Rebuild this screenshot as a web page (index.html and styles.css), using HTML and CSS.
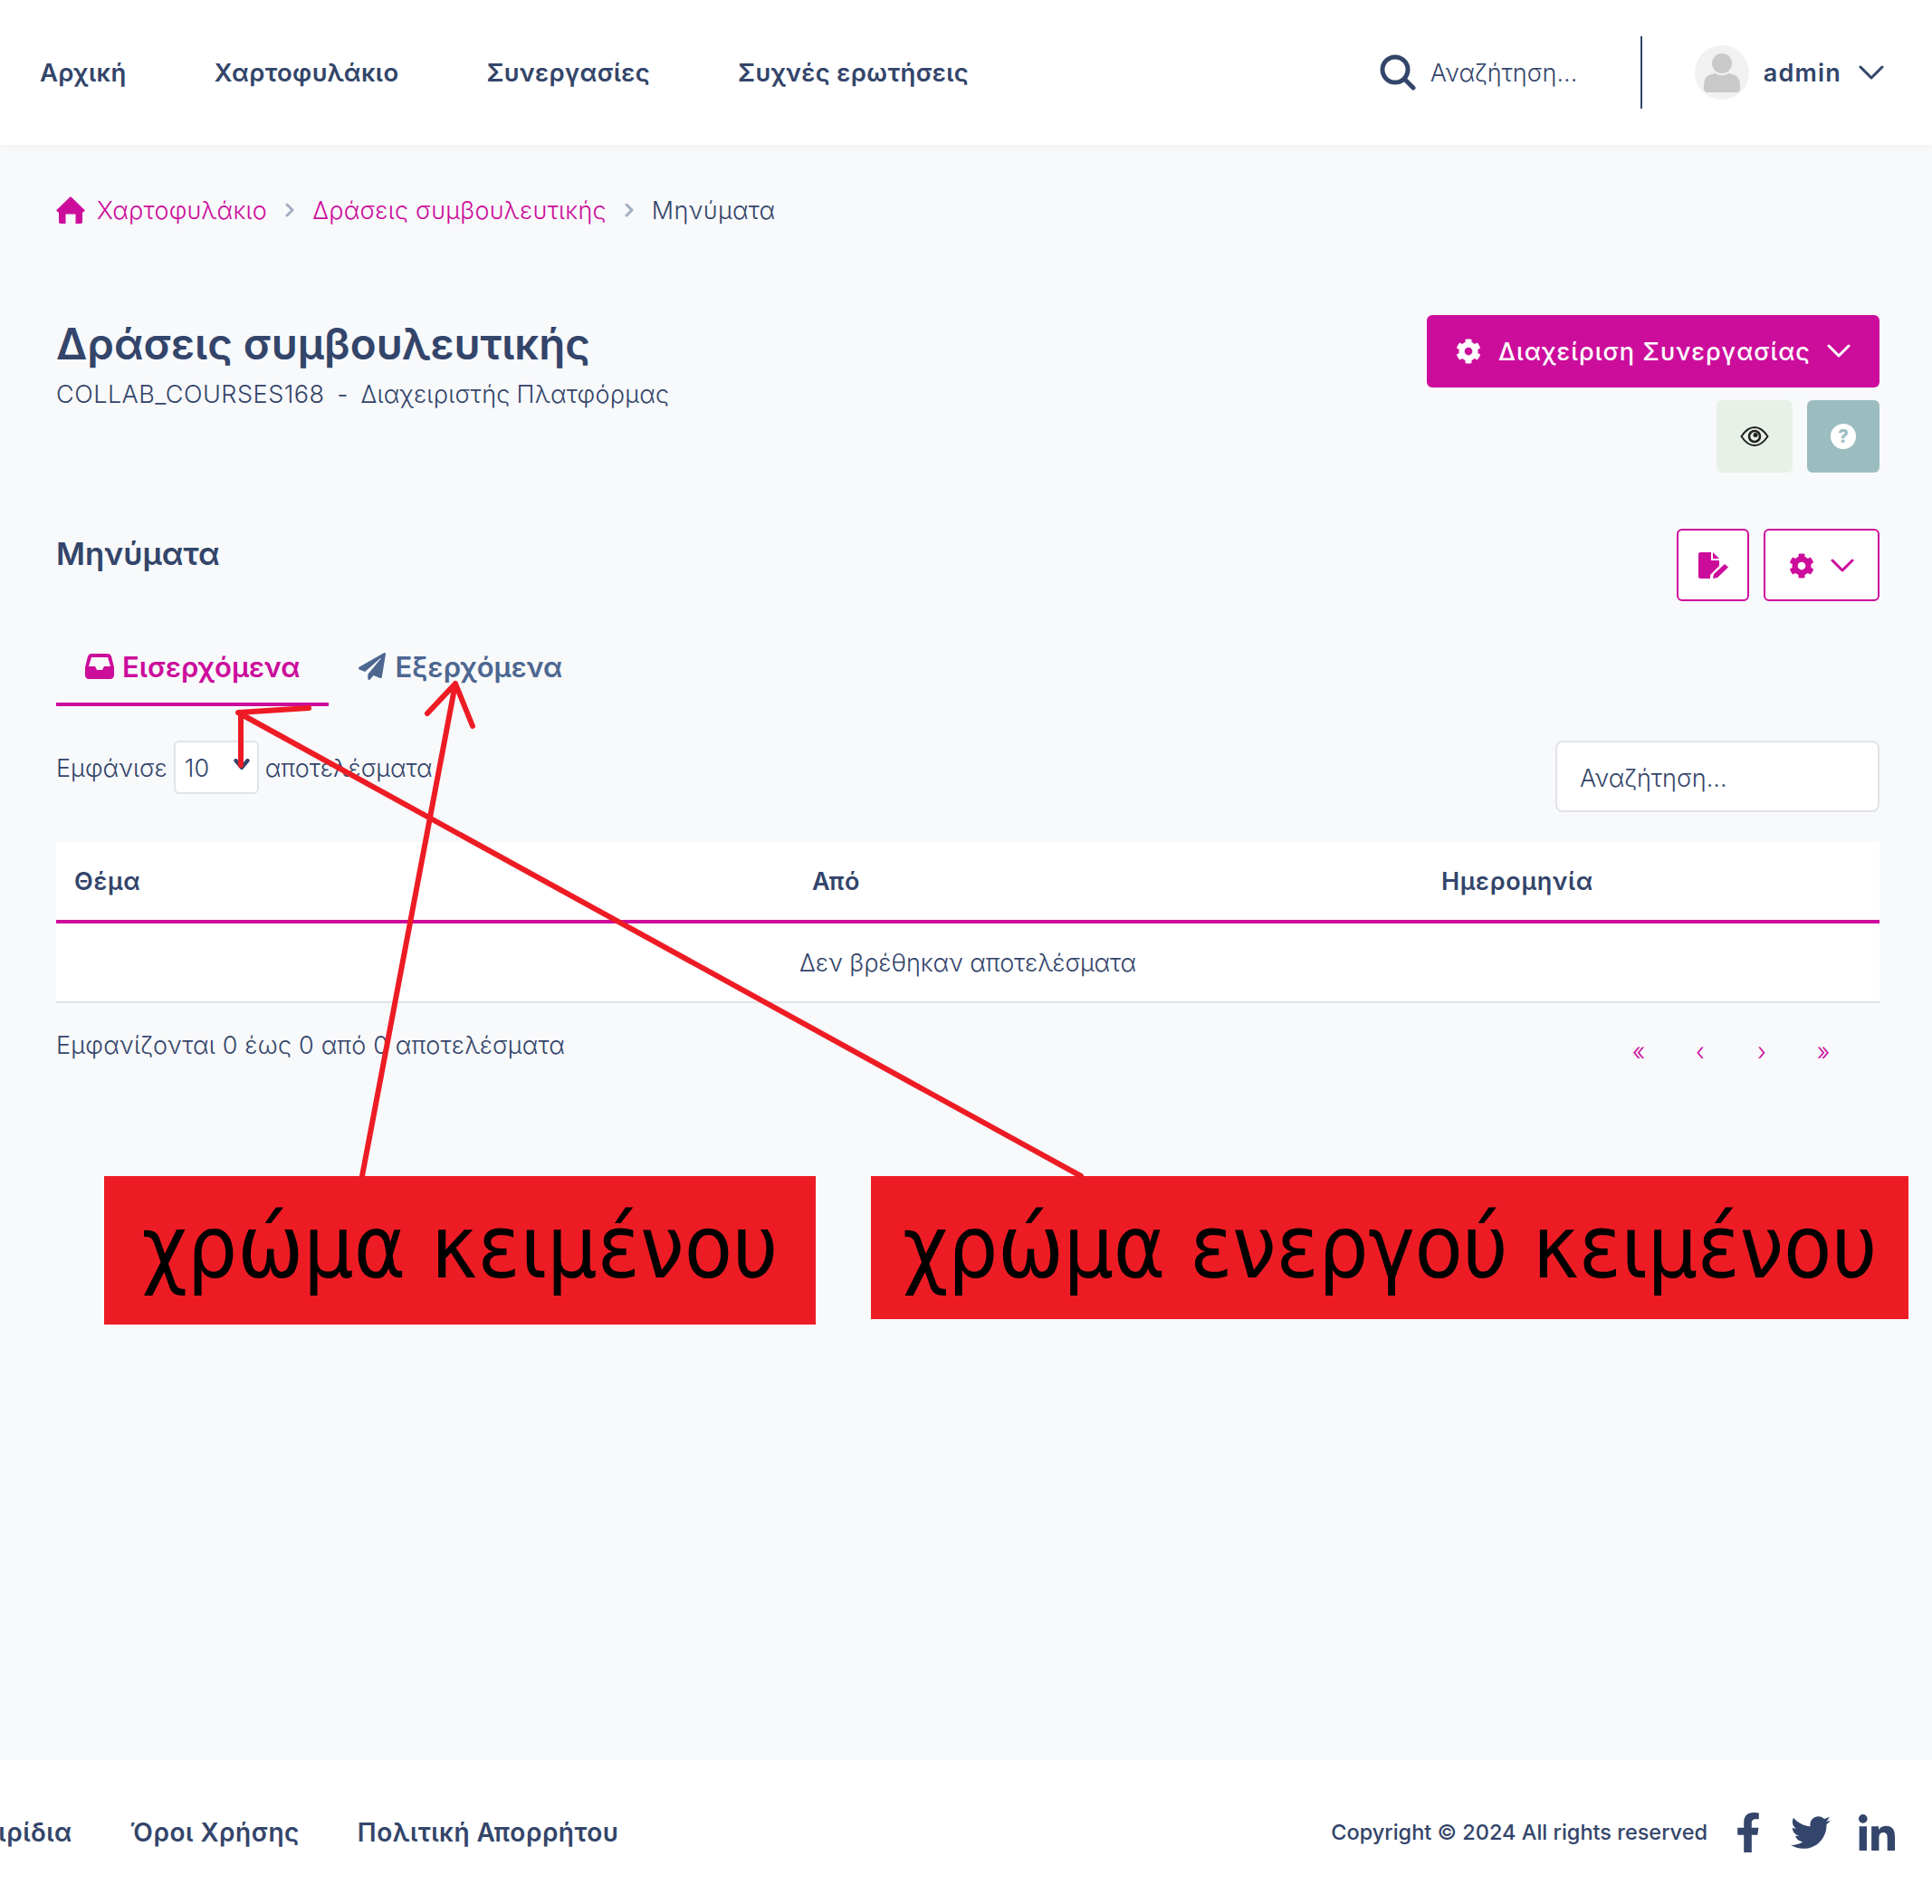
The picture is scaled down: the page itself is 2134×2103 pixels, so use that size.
FILE: index.html
```html
<!DOCTYPE html>
<html lang="el">
<head>
    <meta charset="UTF-8">
    <title>Μηνύματα</title>
    <link rel="stylesheet" href="styles.css">
</head>
<body>
    <header class="topbar">
        <nav class="topnav">
            <a href="#">Αρχική</a>
            <a href="#">Χαρτοφυλάκιο</a>
            <a href="#">Συνεργασίες</a>
            <a href="#">Συχνές ερωτήσεις</a>
        </nav>
        <div class="topsearch">
            <svg class="search-icon" viewBox="0 0 40 40"><circle cx="17" cy="17" r="14" fill="none" stroke="currentColor" stroke-width="5"/><path d="M27 27l10 10" stroke="currentColor" stroke-width="5" stroke-linecap="round"/></svg>
            <span>Αναζήτηση...</span>
        </div>
        <div class="usermenu">
            <span class="avatar">
                <svg viewBox="0 0 60 60"><circle cx="30" cy="20" r="11" fill="#c9c9c9"/><path d="M10 48c0-9 1-13 6-15 3-1 5-2 7-2 2 3 12 3 14 0 2 0 4 1 7 2 5 2 6 6 6 15 0 3-2 4-4 4H14c-2 0-4-1-4-4z" fill="#c9c9c9"/></svg>
            </span>
            <span class="username">admin</span>
            <svg class="chev chev-user" viewBox="0 0 28 16"><path d="M2 2l12 12L26 2"/></svg>
        </div>
    </header>

    <main class="content">
        <div class="crumbs">
            <svg class="home-icon" viewBox="0 0 32 30"><path d="M16 0l16 15.500-3 2.500v10c0 1-.7 2-2 2h-5.500v-10.500h-11V30H5c-1.300 0-2-1-2-2V18l-3-2.500z"/></svg>
            <a href="#">Χαρτοφυλάκιο</a>
            <svg class="crumb-sep" viewBox="0 0 10 16"><path d="M2 2l6 6-6 6"/></svg>
            <a href="#">Δράσεις συμβουλευτικής</a>
            <svg class="crumb-sep" viewBox="0 0 10 16"><path d="M2 2l6 6-6 6"/></svg>
            <span>Μηνύματα</span>
        </div>

        <div class="course-head">
            <div class="course-title">
                <h1>Δράσεις συμβουλευτικής</h1>
                <p class="course-sub"><span class="course-code">COLLAB_COURSES168</span> &nbsp;-&nbsp; Διαχειριστής Πλατφόρμας</p>
            </div>
            <div class="course-actions">
                <button class="btn-manage">
                    <svg class="gear" viewBox="0 0 512 512"><path d="M487.400 315.700l-42.600-24.600c4.300-23.200 4.300-47 0-70.200l42.600-24.600c4.900-2.800 7.100-8.600 5.500-14-11.100-35.600-30-67.800-54.700-94.600-3.800-4.100-10-5.100-14.800-2.300L380.800 110c-17.900-15.400-38.500-27.300-60.800-35.100V25.800c0-5.600-3.900-10.500-9.400-11.700-36.700-8.200-74.300-7.800-109.200 0-5.500 1.200-9.400 6.100-9.400 11.700V75c-22.200 7.900-42.800 19.800-60.800 35.100L88.700 85.500c-4.900-2.800-11-1.900-14.800 2.300-24.700 26.700-43.600 58.900-54.700 94.600-1.700 5.400.6 11.200 5.500 14L67.300 221c-4.300 23.200-4.300 47 0 70.200l-42.600 24.600c-4.900 2.800-7.100 8.600-5.500 14 11.100 35.600 30 67.800 54.700 94.600 3.800 4.100 10 5.100 14.800 2.300l42.600-24.600c17.900 15.400 38.500 27.300 60.800 35.100v49.200c0 5.600 3.900 10.500 9.400 11.700 36.700 8.200 74.300 7.800 109.200 0 5.500-1.200 9.400-6.100 9.400-11.700v-49.200c22.200-7.900 42.800-19.800 60.800-35.100l42.600 24.600c4.900 2.800 11 1.900 14.800-2.300 24.700-26.700 43.600-58.900 54.700-94.600 1.500-5.500-.7-11.300-5.600-14.100zM256 336c-44.100 0-80-35.900-80-80s35.900-80 80-80 80 35.900 80 80-35.900 80-80 80z"/></svg>
                    <span>Διαχείριση Συνεργασίας</span>
                    <svg class="chev chev-manage" viewBox="0 0 26 16"><path d="M2 2l11 11L24 2"/></svg>
                </button>
                <div class="small-actions">
                    <button class="btn-eye">
                        <svg viewBox="0 0 32 24"><path d="M1.500 12C6 5 11 2 16 2s10 3 14.500 10C26 19 21 22 16 22S6 19 1.500 12z" fill="none" stroke="#222" stroke-width="2"/><circle cx="16" cy="12" r="6" fill="none" stroke="#222" stroke-width="2.600"/><circle cx="17" cy="10.500" r="2.500" fill="#222"/></svg>
                    </button>
                    <button class="btn-help"><span>?</span></button>
                </div>
            </div>
        </div>

        <div class="section-head">
            <h2>Μηνύματα</h2>
            <div class="section-actions">
                <button class="btn-line btn-compose">
                    <svg viewBox="0 0 34 30"><path d="M2 0h12v9h9v6L13 25v4H2c-1 0-2-1-2-2V2C0 1 1 0 2 0zM16 0l7 7h-7zM29 13l4 3.500-12 11.500-5 1 1-5z" fill="currentColor"/></svg>
                </button>
                <button class="btn-line btn-tools">
                    <svg class="gear" viewBox="0 0 512 512"><path d="M487.400 315.700l-42.600-24.600c4.300-23.200 4.300-47 0-70.200l42.600-24.600c4.900-2.800 7.100-8.600 5.500-14-11.100-35.600-30-67.800-54.700-94.600-3.800-4.100-10-5.100-14.800-2.300L380.800 110c-17.900-15.400-38.500-27.300-60.800-35.100V25.800c0-5.600-3.900-10.500-9.400-11.700-36.700-8.200-74.300-7.800-109.200 0-5.500 1.200-9.400 6.100-9.400 11.700V75c-22.200 7.900-42.800 19.800-60.800 35.100L88.700 85.500c-4.900-2.800-11-1.900-14.800 2.300-24.700 26.700-43.600 58.900-54.700 94.600-1.700 5.400.6 11.200 5.500 14L67.300 221c-4.300 23.200-4.300 47 0 70.200l-42.600 24.600c-4.900 2.800-7.100 8.600-5.500 14 11.100 35.600 30 67.800 54.700 94.600 3.800 4.100 10 5.100 14.800 2.300l42.600-24.600c17.900 15.400 38.500 27.300 60.800 35.100v49.200c0 5.600 3.900 10.500 9.400 11.700 36.700 8.200 74.300 7.800 109.200 0 5.500-1.200 9.400-6.100 9.400-11.700v-49.200c22.200-7.900 42.800-19.800 60.800-35.100l42.600 24.600c4.900 2.800 11 1.900 14.800-2.300 24.700-26.700 43.600-58.900 54.700-94.600 1.500-5.500-.7-11.300-5.600-14.100zM256 336c-44.100 0-80-35.900-80-80s35.900-80 80-80 80 35.900 80 80-35.900 80-80 80z"/></svg>
                    <svg class="chev chev-tools" viewBox="0 0 26 16"><path d="M2 2l11 11L24 2"/></svg>
                </button>
            </div>
        </div>

        <div class="tabs">
            <a href="#" class="tab tab-active">
                <svg viewBox="0 0 32 28"><path d="M7 0h18c2 0 3 1 4 3l3 12v9c0 2-2 4-4 4H4c-2 0-4-2-4-4v-9L3 3C4 1 5 0 7 0zm0 4L4 14h7l2 4h6l2-4h7L25 4z" fill="currentColor"/></svg>
                Εισερχόμενα
            </a>
            <a href="#" class="tab">
                <svg viewBox="0 0 512 512"><path fill="currentColor" d="M476 3.200L12.500 270.600c-18.100 10.400-15.800 35.600 2.200 43.200L121 358.400l287.300-253.200c5.500-4.900 13.300 2.600 8.600 8.300L176 407v80.500c0 23.600 28.500 32.900 42.500 15.800L282 426l124.600 52.200c14.200 6 30.400-2.900 33-18.200l72-432C515 7.800 493.300-6.800 476 3.200z"/></svg>
                Εξερχόμενα
            </a>
        </div>

        <div class="table-tools">
            <div class="page-size">
                <span class="size-label">Εμφάνισε</span>
                <span class="size-select">10
                    <svg viewBox="0 0 16 12"><path d="M2 2l6 7 6-7"/></svg>
                </span>
                <span class="size-label">αποτελέσματα</span>
            </div>
            <input class="table-search" type="text" placeholder="Αναζήτηση...">
        </div>

        <table class="msg-table">
            <thead>
                <tr>
                    <th class="col-subject">Θέμα</th>
                    <th class="col-from">Από</th>
                    <th>Ημερομηνία</th>
                </tr>
            </thead>
            <tbody>
                <tr><td colspan="3">Δεν βρέθηκαν αποτελέσματα</td></tr>
            </tbody>
        </table>

        <div class="table-foot">
            <span>Εμφανίζονται 0 έως 0 από 0 αποτελέσματα</span>
            <div class="pager">
                <a href="#">«</a>
                <a href="#">‹</a>
                <a href="#">›</a>
                <a href="#">»</a>
            </div>
        </div>
    </main>

    <footer class="bottombar">
        <div class="footer-links">
            <a href="#" class="link-cut">Εγχειρίδια</a>
            <a href="#">Όροι Χρήσης</a>
            <a href="#">Πολιτική Απορρήτου</a>
        </div>
        <div class="footer-right">
            <span class="copyright">Copyright © 2024 All rights reserved</span>
            <svg class="soc soc-f" viewBox="0 0 320 512"><path d="M279.140 288l14.220-92.660h-88.910v-60.130c0-25.350 12.420-50.060 52.240-50.060h40.420V6.260S260.430 0 225.360 0c-73.220 0-121.080 44.380-121.080 124.720v70.620H22.890V288h81.390v224h100.170V288z"/></svg>
            <svg class="soc soc-t" viewBox="0 0 512 512"><path d="M459.37 151.716c.325 4.548.325 9.097.325 13.645 0 138.720-105.583 298.558-298.558 298.558-59.452 0-114.680-17.219-161.137-47.106 8.447.974 16.568 1.299 25.340 1.299 49.055 0 94.213-16.568 130.274-44.832-46.132-.975-84.792-31.188-98.112-72.772 6.498.974 12.995 1.624 19.818 1.624 9.421 0 18.843-1.300 27.614-3.573-48.081-9.747-84.143-51.980-84.143-102.985v-1.299c13.969 7.797 30.214 12.670 47.431 13.319-28.264-18.843-46.781-51.005-46.781-87.391 0-19.492 5.197-37.360 14.294-52.954 51.655 63.675 129.300 105.258 216.365 109.807-1.624-7.797-2.599-15.918-2.599-24.040 0-57.828 46.782-104.934 104.934-104.934 30.213 0 57.502 12.670 76.670 33.137 23.715-4.548 46.456-13.320 66.599-25.340-7.798 24.366-24.366 44.833-46.132 57.827 21.117-2.273 41.584-8.122 60.426-16.243-14.292 20.791-32.161 39.308-52.628 54.253z"/></svg>
            <svg class="soc soc-in" viewBox="0 0 448 448"><path d="M100.280 448H7.400V148.900h92.880zM53.790 108.100C24.090 108.100 0 83.500 0 53.800a53.790 53.790 0 0 1 107.580 0c0 29.700-24.100 54.300-53.790 54.300zM447.900 448h-92.680V302.400c0-34.700-.7-79.200-48.290-79.200-48.290 0-55.690 37.700-55.690 76.700V448h-92.780V148.900h89.080v40.800h1.300c12.400-23.500 42.690-48.300 87.880-48.300 94 0 111.280 61.900 111.280 142.300V448z"/></svg>
        </div>
    </footer>

    <!-- annotations drawn over the page -->
    <svg class="arrows" viewBox="0 0 2134 2103">
        <path d="M400 1299L503 755M472 788L503 755L522 802"/>
        <path d="M1194 1299L263 787L341 782M266 787V845"/>
    </svg>
    <div class="note note-text">χρώμα κειμένου</div>
    <div class="note note-active">χρώμα ενεργού κειμένου</div>
</body>
</html>
```

FILE: styles.css
```css
body {
    margin: 0;
    min-height: 2103px;
    display: flex;
    flex-direction: column;
    position: relative;
    overflow-x: hidden;
    background-color: #f8f9fb;
    color: #33456a;
    font-family: Inter, "Noto Sans", sans-serif;
    font-size: 27px;
    font-weight: 300;
}
a {
    color: inherit;
    text-decoration: none;
}
button {
    border: none;
    cursor: pointer;
    font-family: inherit;
}
.chev path,
.crumb-sep path,
.size-select path {
    fill: none;
    stroke: currentColor;
    stroke-width: 3;
    stroke-linecap: round;
    stroke-linejoin: round;
}

/* top bar */
.topbar {
    height: 160px;
    flex-shrink: 0;
    display: flex;
    align-items: center;
    padding: 0 53px 0 44px;
    background-color: #fff;
    box-shadow: 0 2px 8px rgba(0, 0, 0, 0.03);
    position: relative;
}
.topnav {
    display: flex;
    gap: 97px;
    font-size: 27.5px;
    font-weight: 600;
    letter-spacing: 0.35px;
    margin-right: auto;
}
.topsearch {
    display: flex;
    align-items: center;
    gap: 16px;
    width: 288px;
    height: 80px;
    border-right: 2px solid #33456a;
}
.search-icon {
    width: 40px;
    height: 40px;
}
.usermenu {
    display: flex;
    align-items: center;
    margin-left: 58px;
}
.avatar {
    width: 60px;
    height: 60px;
    border-radius: 50%;
    background-color: #f1f1f1;
    overflow: hidden;
}
.avatar svg {
    display: block;
}
.username {
    margin-left: 16px;
    font-weight: 600;
    letter-spacing: 1.2px;
}
.chev-user {
    width: 28px;
    height: 16px;
    margin-left: 19px;
}

/* main area */
.content {
    flex: 1;
    padding: 0 58px 0 62px;
}
.crumbs {
    display: flex;
    align-items: center;
    height: 144px;
    letter-spacing: 0.25px;
    color: #33456a;
}
.crumbs a {
    color: #cc0d9c;
}
.home-icon {
    width: 32px;
    height: 30px;
    margin-right: 13px;
    fill: #cc0d9c;
}
.crumb-sep {
    width: 10px;
    height: 16px;
    margin: 0 20px;
    color: #a4aec0;
}
.course-head {
    display: flex;
    justify-content: space-between;
    padding-top: 44px;
}
.course-title {
    padding-top: 3px;
}
h1 {
    margin: 0;
    font-size: 47.5px;
    line-height: 58px;
    font-weight: 600;
}
.course-sub {
    margin: 10px 0 0;
    font-size: 27px;
    letter-spacing: 0.25px;
    word-spacing: -1px;
}
.course-code {
    letter-spacing: 0.5px;
}
.course-actions {
    display: flex;
    flex-direction: column;
    align-items: flex-end;
    gap: 14px;
}
.btn-manage {
    width: 500px;
    height: 80px;
    display: flex;
    align-items: center;
    padding: 0 32px;
    background-color: #cc0d9c;
    color: #fff;
    border-radius: 6px;
    font-size: 27px;
    font-weight: 500;
    letter-spacing: 1px;
}
.btn-manage span {
    margin-left: 19px;
}
.btn-manage .gear {
    width: 28px;
    height: 28px;
    fill: #fff;
}
.chev-manage {
    width: 26px;
    height: 16px;
    margin-left: auto;
}
.small-actions {
    display: flex;
    gap: 16px;
}
.btn-eye,
.btn-help {
    height: 80px;
    border-radius: 6px;
    display: flex;
    align-items: center;
    justify-content: center;
}
.btn-eye {
    width: 84px;
    background-color: #e7f1e8;
}
.btn-eye svg {
    width: 32px;
    height: 24px;
}
.btn-help {
    width: 80px;
    background-color: #9cbdbf;
}
.btn-help span {
    width: 28px;
    height: 28px;
    border-radius: 50%;
    background-color: #fff;
    color: #9cbdbf;
    font-size: 20px;
    font-weight: 800;
    line-height: 28px;
}

.section-head {
    display: flex;
    justify-content: space-between;
    align-items: center;
    margin-top: 62px;
}
h2 {
    margin: 0;
    font-size: 34.7px;
    font-weight: 600;
    position: relative;
    top: -13px;
}
.section-actions {
    display: flex;
    gap: 16px;
}
.btn-line {
    height: 80px;
    background-color: #fff;
    border: 2px solid #cc0d9c;
    border-radius: 6px;
    color: #cc0d9c;
    display: flex;
    align-items: center;
    justify-content: center;
    padding-top: 2px;
}
.btn-compose {
    width: 80px;
    padding-left: 8px;
}
.btn-compose svg {
    width: 34px;
    height: 30px;
}
.btn-tools {
    width: 128px;
    gap: 18px;
}
.btn-tools .gear {
    width: 28px;
    height: 28px;
    fill: #cc0d9c;
}
.chev-tools {
    width: 26px;
    height: 16px;
}

.tabs {
    display: flex;
    margin-top: 32px;
}
.tab {
    display: flex;
    align-items: center;
    gap: 9px;
    height: 84px;
    box-sizing: border-box;
    padding: 0 32px;
    border-bottom: 4px solid transparent;
    color: #4d6791;
    font-size: 31px;
    font-weight: 600;
}
.tab svg {
    width: 32px;
    height: 30px;
}
.tab-active {
    color: #cc0d9c;
    border-bottom-color: #cc0d9c;
}

.table-tools {
    display: flex;
    justify-content: space-between;
    align-items: flex-start;
    margin-top: 38px;
}
.page-size {
    display: flex;
    align-items: center;
    gap: 7px;
}
.size-label {
    padding-top: 2px;
}
.size-select {
    width: 94px;
    height: 59px;
    box-sizing: border-box;
    display: flex;
    align-items: center;
    justify-content: space-between;
    padding: 2px 8px 0 10px;
    border: 2px solid #e0e3e8;
    border-radius: 6px;
    background-color: #fff;
}
.size-select svg {
    width: 18px;
    height: 13px;
    margin-top: -8px;
}
.size-select path {
    stroke-width: 4;
}
.table-search {
    width: 358px;
    height: 79px;
    box-sizing: border-box;
    padding: 3px 25px 0;
    border: 2px solid #e0e3e8;
    border-radius: 8px;
    background-color: #fff;
    color: #33456a;
    font: inherit;
}
.table-search::placeholder {
    color: #33456a;
    opacity: 1;
}

.msg-table {
    width: 100%;
    margin-top: 33px;
    border-collapse: collapse;
    background-color: #fff;
    table-layout: fixed;
}
.msg-table th {
    height: 85px;
    padding: 1px 0 0;
    border-bottom: 4px solid #cc0d9c;
    text-align: left;
    font-weight: 600;
    letter-spacing: 0.7px;
}
.col-subject {
    width: 835px;
    text-indent: 20px;
}
.col-from {
    width: 695px;
}
.msg-table td {
    height: 85px;
    padding: 1px 0 0;
    border-bottom: 2px solid #e0e3e8;
    text-align: center;
    letter-spacing: -0.1px;
}
.table-foot {
    display: flex;
    justify-content: space-between;
    margin-top: 30px;
    letter-spacing: 0.2px;
}
.pager {
    display: flex;
    color: #cc0d9c;
    padding: 7px 28px 0 0;
}
.pager a {
    width: 68px;
    text-align: center;
}

/* footer */
.bottombar {
    height: 159px;
    flex-shrink: 0;
    display: flex;
    align-items: center;
    justify-content: space-between;
    padding-right: 41px;
    background-color: #fff;
}
.footer-links {
    display: flex;
    gap: 64px;
    font-size: 28px;
    font-weight: 600;
    letter-spacing: 0.5px;
}
.link-cut {
    margin-left: -69px;
}
.footer-right {
    display: flex;
    align-items: center;
}
.copyright {
    font-size: 23.5px;
    font-weight: 500;
    margin-right: 31px;
}
.soc {
    fill: #33456a;
}
.soc-f {
    width: 28px;
    height: 44px;
}
.soc-t {
    width: 46px;
    height: 44px;
    margin-left: 32px;
}
.soc-in {
    width: 40px;
    height: 40px;
    margin-left: 30px;
}

/* red annotations */
.arrows {
    position: absolute;
    left: 0;
    top: 0;
    width: 2134px;
    height: 2103px;
    pointer-events: none;
}
.arrows path {
    fill: none;
    stroke: #ed1c24;
    stroke-width: 6;
    stroke-linecap: round;
    stroke-linejoin: round;
}
.note {
    position: absolute;
    top: 1299px;
    background-color: #ed1c24;
    color: #000;
    font-family: "DejaVu Sans Condensed", "DejaVu Sans", sans-serif;
    font-size: 97px;
    font-weight: 400;
    text-align: center;
    white-space: nowrap;
}
.note-text {
    left: 115px;
    width: 786px;
    height: 164px;
    line-height: 158px;
}
.note-active {
    left: 962px;
    width: 1146px;
    height: 158px;
    line-height: 158px;
    letter-spacing: -0.4px;
}
```
